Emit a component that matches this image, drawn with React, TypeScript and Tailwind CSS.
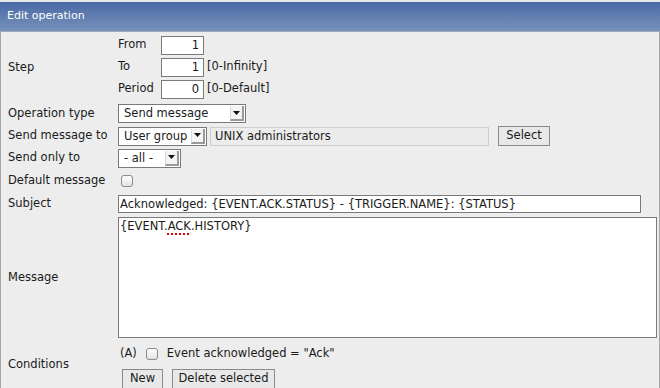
import React from 'react';

const font = { fontFamily: '"DejaVu Sans", Verdana, sans-serif' };

function Select({ value, width }: { value: string; width: string }) {
  return (
    <div className={`${width} h-[19px] flex bg-white border border-[#7a7a7a]`}>
      <div className="flex-1 pl-[5px] leading-[17px] truncate">{value}</div>
      <div className="w-[14px] my-[1px] mr-[1px] flex items-center justify-center bg-[#f4f4f4] border-r-2 border-b-2 border-[#9a9a9a] border-l border-l-[#d8d8d8]">
        <svg width="7" height="4" viewBox="0 0 7 4">
          <path d="M0 0h7L3.5 4z" fill="#111" />
        </svg>
      </div>
    </div>
  );
}

function Checkbox() {
  return (
    <div className="w-[12px] h-[12px] rounded-[3px] border border-[#8c8c8c] bg-gradient-to-b from-white to-[#e2e2e2]" />
  );
}

function NumInput({ value }: { value: string }) {
  return (
    <div className="w-[43px] h-[19px] bg-white border border-[#7a7a7a] text-right pr-[4px] leading-[17px]">
      {value}
    </div>
  );
}

function Button({ children, className = '' }: { children: React.ReactNode; className?: string }) {
  return (
    <div
      className={`h-[20px] flex items-center justify-center bg-[#e8e8e8] border border-[#8a8a8a] ${className}`}
    >
      {children}
    </div>
  );
}

function Row({ label, h, children, top = false }: { label: string; h: string; children: React.ReactNode; top?: boolean }) {
  return (
    <div className={`grid grid-cols-[117px_1fr] ${h}`}>
      <div className="pl-[7px] flex items-center">{label}</div>
      <div className={`flex ${top ? 'flex-col' : 'items-center'}`}>{children}</div>
    </div>
  );
}

export default function App() {
  return (
    <div className="w-[660px] h-[388px] overflow-hidden bg-[#e9e9e9] pt-[2px] text-[11.5px] text-[#1a1a1a]" style={font}>
      {/* Header */}
      <div className="h-[30px] pl-[7px] flex items-center text-white text-[11px] bg-gradient-to-b from-[#4a69a4] to-[#7892ba] border-b border-[#9ea8b8]">
        Edit operation
      </div>

      <div className="h-[356px] bg-[#ededed] border-l border-r border-[#a6a6a6] pt-[2px]">
        {/* Step */}
        <Row label="Step" h="h-[68px]" top>
          {[
            ['From', '1', ''],
            ['To', '1', '[0-Infinity]'],
            ['Period', '0', '[0-Default]'],
          ].map(([l, v, s]) => (
            <div key={l} className="h-[22px] flex items-center">
              <div className="w-[43px]">{l}</div>
              <NumInput value={v} />
              <div className="ml-[3px]">{s}</div>
            </div>
          ))}
        </Row>

        <Row label="Operation type" h="h-[23px]">
          <Select value="Send message" width="w-[128px]" />
        </Row>

        <Row label="Send message to" h="h-[22px]">
          <Select value="User group" width="w-[89px]" />
          <div className="ml-[3px] w-[279px] h-[19px] pl-[4px] leading-[17px] bg-[#ececec] border border-[#cdcdcd]">
            UNIX administrators
          </div>
          <Button className="ml-[9px] w-[52px]">Select</Button>
        </Row>

        <Row label="Send only to" h="h-[22px]">
          <Select value="- all -" width="w-[63px]" />
        </Row>

        <Row label="Default message" h="h-[23px]">
          <div className="ml-[3px]">
            <Checkbox />
          </div>
        </Row>

        <Row label="Subject" h="h-[23px]">
          <div className="w-[523px] h-[18px] bg-white border border-[#7a7a7a] pl-[1px] leading-[16px] whitespace-nowrap">
            Acknowledged: {'{EVENT.ACK.STATUS}'} - {'{TRIGGER.NAME}'}: {'{STATUS}'}
          </div>
        </Row>

        <Row label="Message" h="h-[125px]">
          <div className="w-[539px] h-[121px] bg-white border border-[#7a7a7a] pl-[1px] pt-[1px] leading-[14px]">
            {'{EVENT.'}
            <span className="underline decoration-dotted decoration-[#d00] decoration-2 underline-offset-[3px]">ACK</span>
            {'.HISTORY}'}
          </div>
        </Row>

        <Row label="Conditions" h="h-[50px]" top>
          <div className="pt-[3px] h-[25px] flex items-center">
            <span className="ml-[2px]">(A)</span>
            <div className="ml-[9px]">
              <Checkbox />
            </div>
            <span className="ml-[9px]">Event acknowledged = "Ack"</span>
          </div>
          <div className="pt-[4px] flex">
            <Button className="ml-[4px] w-[41px]">New</Button>
            <Button className="ml-[9px] w-[103px]">Delete selected</Button>
          </div>
        </Row>
      </div>
    </div>
  );
}
